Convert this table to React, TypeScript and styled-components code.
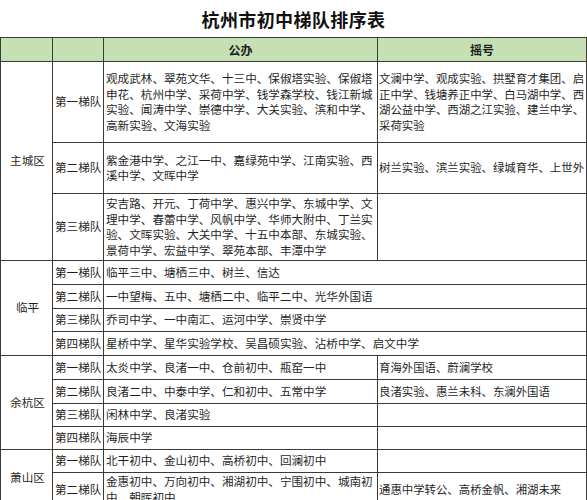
import { Fragment } from "react";
import styled, { createGlobalStyle } from "styled-components";

type Tier = {
  name: string;
  height: number;
  pub: string[];
  lottery?: string[];
  merged?: boolean;
};

type District = {
  name: string;
  tiers: Tier[];
};

const districts: District[] = [
  {
    name: "主城区",
    tiers: [
      {
        name: "第一梯队",
        height: 81,
        pub: [
          "观成武林、翠苑文华、十三中、保俶塔实验、保俶塔",
          "申花、杭州中学、采荷中学、钱学森学校、钱江新城",
          "实验、闻涛中学、崇德中学、大关实验、滨和中学、",
          "高新实验、文海实验",
        ],
        lottery: [
          "文澜中学、观成实验、拱墅育才集团、启",
          "正中学、钱塘养正中学、白马湖中学、西",
          "湖公益中学、西湖之江实验、建兰中学、",
          "采荷实验",
        ],
      },
      {
        name: "第二梯队",
        height: 51,
        pub: ["紫金港中学、之江一中、嘉绿苑中学、江南实验、西", "溪中学、文晖中学"],
        lottery: ["树兰实验、滨兰实验、绿城育华、上世外"],
      },
      {
        name: "第三梯队",
        height: 67,
        pub: [
          "安吉路、开元、丁荷中学、惠兴中学、东城中学、文",
          "理中学、春蕾中学、风帆中学、华师大附中、丁兰实",
          "验、文晖实验、大关中学、十五中本部、东城实验、",
          "景荷中学、宏益中学、翠苑本部、丰潭中学",
        ],
        lottery: [],
      },
    ],
  },
  {
    name: "临平",
    tiers: [
      { name: "第一梯队", height: 24, merged: true, pub: ["临平三中、塘栖三中、树兰、信达"] },
      { name: "第二梯队", height: 24, merged: true, pub: ["一中望梅、五中、塘栖二中、临平二中、光华外国语"] },
      { name: "第三梯队", height: 23, merged: true, pub: ["乔司中学、一中南汇、运河中学、崇贤中学"] },
      { name: "第四梯队", height: 24, merged: true, pub: ["星桥中学、星华实验学校、吴昌硕实验、沾桥中学、启文中学"] },
    ],
  },
  {
    name: "余杭区",
    tiers: [
      { name: "第一梯队", height: 24, pub: ["太炎中学、良渚一中、仓前初中、瓶窑一中"], lottery: ["育海外国语、蔚澜学校"] },
      { name: "第二梯队", height: 24, pub: ["良渚二中、中泰中学、仁和初中、五常中学"], lottery: ["良渚实验、惠兰未科、东澜外国语"] },
      { name: "第三梯队", height: 23, pub: ["闲林中学、良渚实验"], lottery: [] },
      { name: "第四梯队", height: 23, pub: ["海辰中学"], lottery: [] },
    ],
  },
  {
    name: "萧山区",
    tiers: [
      { name: "第一梯队", height: 23, pub: ["北干初中、金山初中、高桥初中、回澜初中"], lottery: [] },
      {
        name: "第二梯队",
        height: 34,
        pub: ["金惠初中、万向初中、湘湖初中、宁围初中、城南初", "中、朝晖初中"],
        lottery: ["通惠中学转公、高桥金帆、湘湖未来"],
      },
    ],
  },
];

const GlobalStyle = createGlobalStyle`
  html, body {
    margin: 0;
    padding: 0;
    background: #fff;
  }
  body {
    width: 587px;
    height: 500px;
    overflow: hidden;
    font-family: "Noto Sans CJK SC", "Noto Sans", sans-serif;
    color: #1f1f1f;
  }
`;

const Page = styled.div`
  width: 587px;
`;

const Title = styled.h1`
  margin: 0;
  height: 37px;
  line-height: 39px;
  text-align: center;
  font-size: 18px;
  font-weight: 700;
  letter-spacing: 0.4px;
  color: #111;
`;

const Sheet = styled.table`
  border-collapse: collapse;
  table-layout: fixed;
  width: 586px;
`;

const Row = styled.tr<{ $h: number }>`
  height: ${({ $h }) => $h}px;
`;

const Head = styled.th`
  background: #c6e0b4;
  border: 1px solid #3a3a3a;
  font-size: 12px;
  font-weight: 700;
  padding: 0;
  text-align: center;
`;

const Cell = styled.td<{ $center?: boolean; $narrow?: boolean }>`
  border: 1px solid #3a3a3a;
  font-size: ${({ $narrow }) => ($narrow ? "11.4px" : "11.6px")};
  line-height: 15.5px;
  padding: 0 0 0 ${({ $narrow }) => ($narrow ? "1px" : "2px")};
  white-space: nowrap;
  overflow: hidden;
  vertical-align: middle;
  text-align: ${({ $center }) => ($center ? "center" : "left")};
`;

function Lines({ lines }: { lines: string[] }) {
  return (
    <>
      {lines.map((line, i) => (
        <Fragment key={i}>
          {i > 0 && <br />}
          {line}
        </Fragment>
      ))}
    </>
  );
}

export default function App() {
  return (
    <>
      <GlobalStyle />
      <Page>
        <Title>杭州市初中梯队排序表</Title>
        <Sheet>
          <colgroup>
            <col style={{ width: 52 }} />
            <col style={{ width: 51 }} />
            <col style={{ width: 274 }} />
            <col style={{ width: 209 }} />
          </colgroup>
          <tbody>
            <Row $h={24}>
              <Head />
              <Head />
              <Head>公办</Head>
              <Head>摇号</Head>
            </Row>
            {districts.map((d) =>
              d.tiers.map((t, i) => (
                <Row $h={t.height} key={d.name + t.name}>
                  {i === 0 && (
                    <Cell $center rowSpan={d.tiers.length}>
                      {d.name}
                    </Cell>
                  )}
                  <Cell>{t.name}</Cell>
                  <Cell colSpan={t.merged ? 2 : 1}>
                    <Lines lines={t.pub} />
                  </Cell>
                  {!t.merged && (
                    <Cell $narrow>
                      <Lines lines={t.lottery ?? []} />
                    </Cell>
                  )}
                </Row>
              ))
            )}
          </tbody>
        </Sheet>
      </Page>
    </>
  );
}
